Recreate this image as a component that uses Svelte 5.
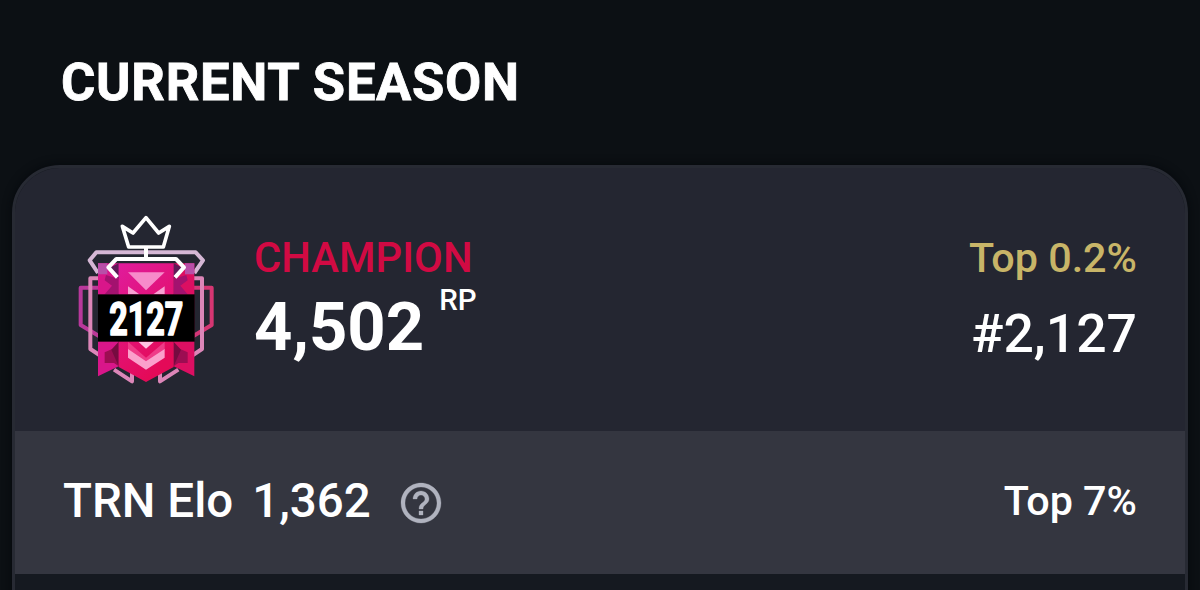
<script>
	export let season = {
		rank: 'CHAMPION',
		points: '4,502',
		percentile: 'Top 0.2%',
		position: '#2,127',
		badge: '2127'
	};
	export let elo = { label: 'TRN Elo', value: '1,362', percentile: 'Top 7%' };
</script>

<main>
	<h2>CURRENT <span>SEASON</span></h2>

	<section class="card">
		<div class="rank">
			<svg class="badge" viewBox="0 0 480 570" fill="none" stroke-linejoin="round">
				<defs>
					<linearGradient id="ribbon" x1="0" y1="0" x2="0.45" y2="1">
						<stop offset="0" stop-color="#e01c9c" />
						<stop offset="1" stop-color="#e40a58" />
					</linearGradient>
					<linearGradient id="wing" x1="0" y1="0" x2="1" y2="0">
						<stop offset="0" stop-color="#b8389c" />
						<stop offset="1" stop-color="#d63672" />
					</linearGradient>
				</defs>

				<g stroke="url(#wing)" stroke-width="12">
					<path d="M85 248H32V360L88 394M372 248H425V360L369 394" />
				</g>
				<g stroke="#dc86b8" stroke-width="12">
					<path d="M88 220H61V432L88 450M369 220H396V432L369 450" />
					<path d="M132 494L186 529V492M325 494L270 529V492" />
				</g>
				<path d="M84 204L59 166L79 142H377L399 166L373 204" stroke="#d5b7d5" stroke-width="12" />

				<path d="M84 175H146V484L84 514Z" fill="#d9168a" />
				<path d="M311 175H373V514L311 484Z" fill="#dc0f62" />
				<path d="M84 175H112V208H84ZM345 175H373V208H345Z" fill="#b84fa8" />
				<path d="M108 210L146 222V268H104L126 242L104 226ZM349 210L311 222V268H353L331 242L353 226Z" fill="#a3126f" />
				<path d="M112 192L146 175V222ZM345 192L311 175V222Z" fill="#5e1c58" />
				<path d="M104 442L146 424V484L132 474H104ZM353 442L311 424V484L325 474H353Z" fill="#9c0d52" />
				<path d="M124 434L146 410V484ZM333 434L311 410V484Z" fill="#760b40" />

				<path d="M146 175H311V486L228 531L146 486Z" fill="url(#ribbon)" />
				<path d="M174 202H284L228 256Z" fill="#f78bca" />
				<path d="M174 244L208 268H174ZM284 244L250 268H284Z" fill="#f7a0d2" />
				<path d="M174 410L228 458L284 410V434L228 492L174 434Z" fill="#ef3b88" />
				<path d="M205 410H252L228 431Z" fill="#ffc2e2" />
				<path d="M174 432L228 469L284 432V458L228 494L174 458Z" fill="#fba0cb" />

				<path d="M142 217L115 187L139 162H318L342 187L315 217" stroke="#fff" stroke-width="12" />
				<path d="M228 126V162" stroke="#fff" stroke-width="12" />
				<path d="M157 64L189 84L228 38L266 84L298 64L280 126H176Z" stroke="#fff" stroke-width="11" />

				<rect x="84" y="268" width="290" height="142" fill="#000" />
				<text x="118" y="389" textLength="222" lengthAdjust="spacingAndGlyphs">{season.badge}</text>
			</svg>

			<div class="info">
				<div class="name">{season.rank}</div>
				<div class="points">{season.points}<sup>RP</sup></div>
			</div>

			<div class="standing">
				<div class="percentile">{season.percentile}</div>
				<div class="position">{season.position}</div>
			</div>
		</div>

		<div class="elo">
			<span class="label">{elo.label}</span>
			<span class="value">{elo.value}</span>
			<svg class="help" viewBox="0 0 24 24" fill="#b0b3bf" stroke="#b0b3bf" stroke-width="0.15">
				<path d="M11 18h2v-2h-2v2zm1-16C6.480 2 2 6.480 2 12s4.480 10 10 10 10-4.480 10-10S17.520 2 12 2zm0 18c-4.410 0-8-3.590-8-8s3.590-8 8-8 8 3.590 8 8-3.590 8-8 8zm0-14c-2.210 0-4 1.790-4 4h2c0-1.100.9-2 2-2s2 .9 2 2c0 2-3 1.750-3 5h2c0-2.250 3-2.500 3-5 0-2.210-1.790-4-4-4z" />
			</svg>
			<span class="top">{elo.percentile}</span>
		</div>
	</section>
</main>

<style>
	:global(body) {
		background: #0c1014;
	}

	main {
		box-sizing: border-box;
		height: 590px;
		padding: 52px 12px 0;
		overflow: hidden;
		color: #fff;
		font-family: Roboto, sans-serif;
		font-weight: 500;
	}

	h2 {
		margin: 0 0 53px 49px;
		font-size: 52.5px;
		line-height: 60px;
		font-weight: 700;
		letter-spacing: 0.7px;
		white-space: nowrap;
		-webkit-text-stroke: 0.8px #fff;
	}

	.card {
		box-sizing: border-box;
		height: 480px;
		border: 3px solid #272a33;
		border-radius: 48px;
		background: #151920;
		overflow: hidden;
		box-shadow: 0 0 10px #05080c;
	}

	.rank {
		display: flex;
		box-sizing: border-box;
		height: 263px;
		padding: 37px 48px 0 55px;
		background: #242631;
	}

	.badge {
		width: 160px;
		height: 190px;
		flex: none;
	}

	.badge text {
		fill: #fff;
		stroke: #fff;
		stroke-width: 5px;
		font-family: Roboto, sans-serif;
		font-size: 138px;
		font-weight: 700;
	}

	.info {
		margin: 28px 0 0 24px;
	}

	.name {
		color: #d10a43;
		font-size: 41.8px;
		line-height: 50px;
	}

	.points {
		display: flex;
		margin-top: 4px;
		font-size: 67px;
		line-height: 80px;
		font-weight: 700;
	}

	sup {
		margin: -5px 0 0 15px;
		font-size: 29.5px;
		line-height: 36px;
		font-weight: 500;
	}

	.standing {
		margin: 28px 0 0 auto;
		text-align: right;
	}

	.percentile {
		color: #c8b568;
		font-size: 41.3px;
		line-height: 50px;
	}

	.position {
		margin-top: 19px;
		font-size: 53.5px;
		line-height: 64px;
	}

	.elo {
		display: flex;
		align-items: center;
		box-sizing: border-box;
		height: 143px;
		padding: 0 48px;
		background: #343640;
		font-size: 47.5px;
	}

	.label,
	.value {
		margin-top: -3px;
	}

	.value {
		margin-left: 19px;
	}

	.help {
		width: 48px;
		height: 48px;
		margin-left: 26px;
	}

	.top {
		margin: -4px 0 0 auto;
		font-size: 41.3px;
	}
</style>
